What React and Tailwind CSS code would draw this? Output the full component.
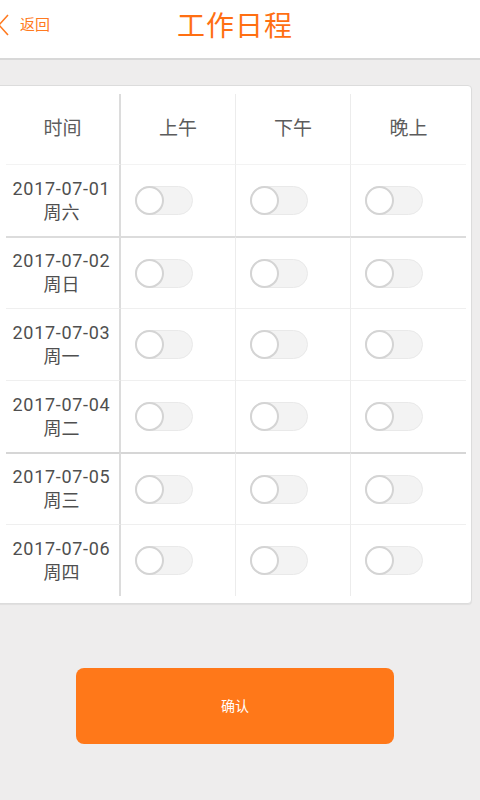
import React from "react";

const rows = [
  { date: "2017-07-01", day: "周六", line: "border-[#f3f3f3]" },
  { date: "2017-07-02", day: "周日", line: "border-[#dcdcdc] border-t-2" },
  { date: "2017-07-03", day: "周一", line: "border-[#efefef]" },
  { date: "2017-07-04", day: "周二", line: "border-[#efefef]" },
  { date: "2017-07-05", day: "周三", line: "border-[#d6d6d6] border-t-2" },
  { date: "2017-07-06", day: "周四", line: "border-[#efefef]" },
];

const Toggle = () => (
  <div className="relative w-[58px] h-[29px] rounded-full bg-[#f3f3f3] border border-[#e9e9e9]">
    <div className="absolute -left-px -top-px w-[29px] h-[29px] rounded-full bg-white border-2 border-[#d4d4d4]" />
  </div>
);

const App = () => {
  return (
    <div
      className="w-[480px] h-[800px] bg-[#eeeded] flex flex-col overflow-hidden"
      style={{ fontFamily: '"Roboto", "Noto Sans CJK SC", sans-serif' }}
    >
      <div className="h-[60px] bg-white border-b-2 border-[#d8d8d8] flex items-center relative shrink-0">
        <div className="flex items-center pb-[8px]">
          <svg width="12" height="22" viewBox="0 0 12 22" className="-ml-[2px]">
            <path d="M10 1 L1 11 L10 21" fill="none" stroke="#ff7a20" strokeWidth="1.6" />
          </svg>
          <span className="ml-[10px] text-[15px] text-[#ff7a20]">返回</span>
        </div>
        <div className="absolute left-0 right-[10px] top-[6px] text-center text-[28px] text-[#ff6f12] tracking-[1px]">
          工作日程
        </div>
      </div>

      <div className="mt-[25px] -ml-[8px] w-[480px] bg-white border border-[#dcdcdc] rounded-[4px] pt-[8px] pb-[7px] pl-[13px] pr-[6px] shadow-[0_1px_1px_rgba(0,0,0,0.06)]">
        <div className="grid grid-cols-[115px_115px_115px_115px] text-[#4f4f4f]">
          <div className="h-[70px] flex items-center justify-center text-[19px] text-[#5c5c5c] border-r-2 border-[#dcdcdc]">时间</div>
          <div className="h-[70px] flex items-center justify-center text-[19px] text-[#5c5c5c] border-r border-[#ececec]">上午</div>
          <div className="h-[70px] flex items-center justify-center text-[19px] text-[#5c5c5c] border-r border-[#ececec]">下午</div>
          <div className="h-[70px] flex items-center justify-center text-[19px] text-[#5c5c5c]">晚上</div>
          {rows.map((r) => (
            <React.Fragment key={r.date}>
              <div className={`h-[72px] border-t ${r.line} border-r-2 border-r-[#dcdcdc] flex flex-col items-center justify-center pr-[2px] text-[18px] leading-[24px] text-[#4f4f4f]`}>
                <span className="tracking-[0.7px]">{r.date}</span>
                <span>{r.day}</span>
              </div>
              <div className={`h-[72px] border-t ${r.line} border-r border-r-[#ececec] flex items-center pl-[14px]`}>
                <Toggle />
              </div>
              <div className={`h-[72px] border-t ${r.line} border-r border-r-[#ececec] flex items-center pl-[14px]`}>
                <Toggle />
              </div>
              <div className={`h-[72px] border-t ${r.line} flex items-center pl-[14px]`}>
                <Toggle />
              </div>
            </React.Fragment>
          ))}
        </div>
      </div>

      <button className="mt-[64px] ml-[76px] w-[318px] h-[76px] rounded-[8px] bg-[#ff7819] text-white text-[14px]">
        确认
      </button>
    </div>
  );
};

export default App;
